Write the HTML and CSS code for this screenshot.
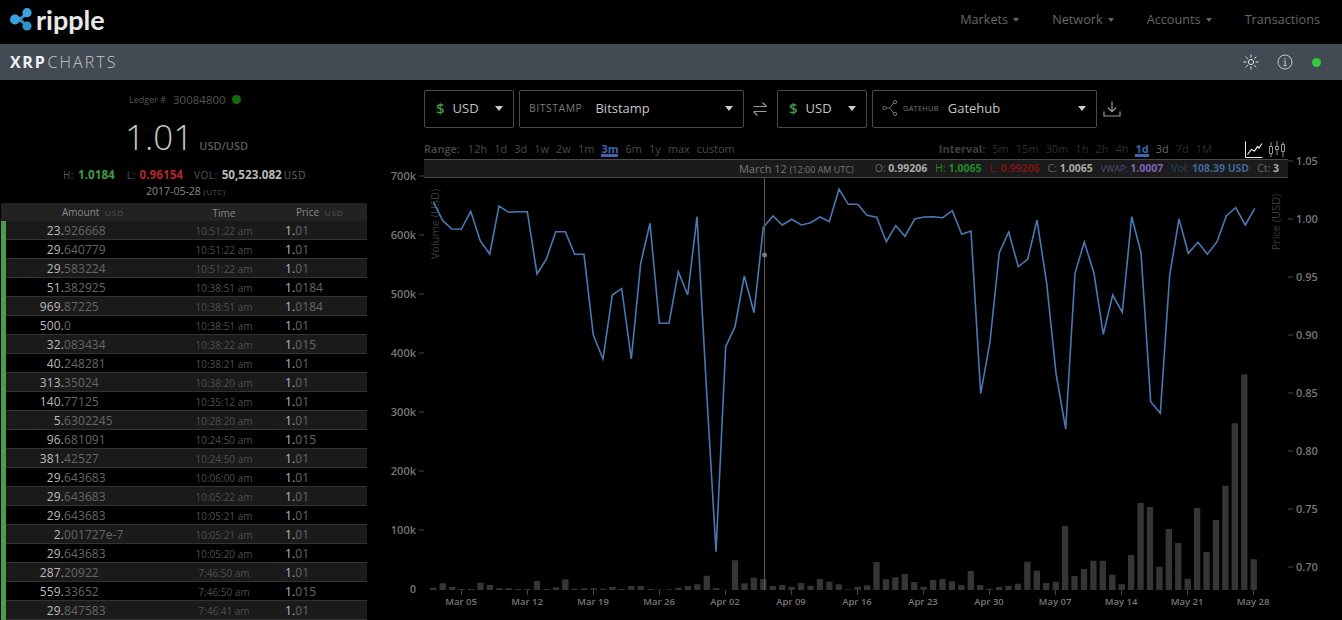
FILE: index.html
```html
<!DOCTYPE html>
<html lang="en">
<head>
<meta charset="utf-8">
<title>XRP Charts</title>
<link rel="stylesheet" href="styles.css">
</head>
<body>
<header class="topbar">
  <a class="logo">
    <svg class="logo-mark" width="26" height="24" viewBox="0 0 26 24"><g stroke="#2f93c9" stroke-width="3" fill="none"><path d="M5 11.5C11 11.5 13 9 17 4.7M5 11.5C11 11.5 13 14 17 18"/></g><circle cx="5" cy="11.5" r="5" fill="#3aa3e0"/><circle cx="17" cy="4.7" r="4.6" fill="#3aa3e0"/><circle cx="17" cy="18" r="4.6" fill="#2f93c9"/></svg>
    <span class="logo-text">ripple</span>
  </a>
  <nav class="nav">
    <span class="nav-item">Markets <i class="caret caret-nav"></i></span>
    <span class="nav-item">Network <i class="caret caret-nav"></i></span>
    <span class="nav-item">Accounts <i class="caret caret-nav"></i></span>
    <span class="nav-item">Transactions</span>
  </nav>
</header>
<div class="subbar">
  <div class="brand"><b>XRP</b><span>CHARTS</span></div>
  <div class="tools">
    <svg width="16" height="16" viewBox="0 0 16 16" fill="none" stroke="#ddd" stroke-width="1"><circle cx="8" cy="8" r="2.6"/><path d="M8 0.5v3M8 12.5v3M0.5 8h3M12.5 8h3M2.7 2.7l2.1 2.1M11.2 11.2l2.1 2.1M2.7 13.3l2.1-2.1M11.2 4.8l2.1-2.1"/></svg>
    <svg width="16" height="16" viewBox="0 0 16 16" fill="none" stroke="#ccc" stroke-width="1"><circle cx="8" cy="8" r="7"/><path d="M6.8 7h1.4v4.5M6.6 11.5h3M8 4v1.4"/></svg>
    <i class="status-dot"></i>
  </div>
</div>
<main class="main">
  <aside class="left">
    <div class="ledger"><span class="ledger-label">Ledger #</span><span class="ledger-num">30084800</span><i class="ledger-dot"></i></div>
    <div class="price-line"><span class="price">1.01</span><span class="pair">USD/USD</span></div>
    <div class="stats">
      <span class="stat-label">H:</span><b class="green">1.0184</b>
      <span class="stat-label l-label">L:</span><b class="red">0.96154</b>
      <span class="stat-label vol-label">VOL:</span><b class="vol">50,523.082</b><span class="vol-cur">USD</span>
    </div>
    <div class="date">2017-05-28 <small>(UTC)</small></div>
    <div class="table">
      <div class="thead"><span class="th-amount">Amount <small>USD</small></span><span class="th-time">Time</span><span class="th-price">Price <small>USD</small></span></div>
      <div class="tr"><i class="bar"></i><span class="int">23.</span><span class="frac">926668</span><span class="time">10:51:22 am</span><span class="px">1.<em>01</em></span></div>
      <div class="tr"><i class="bar"></i><span class="int">29.</span><span class="frac">640779</span><span class="time">10:51:22 am</span><span class="px">1.<em>01</em></span></div>
      <div class="tr"><i class="bar"></i><span class="int">29.</span><span class="frac">583224</span><span class="time">10:51:22 am</span><span class="px">1.<em>01</em></span></div>
      <div class="tr"><i class="bar"></i><span class="int">51.</span><span class="frac">382925</span><span class="time">10:38:51 am</span><span class="px">1.<em>0184</em></span></div>
      <div class="tr"><i class="bar"></i><span class="int">969.</span><span class="frac">87225</span><span class="time">10:38:51 am</span><span class="px">1.<em>0184</em></span></div>
      <div class="tr"><i class="bar"></i><span class="int">500.</span><span class="frac">0</span><span class="time">10:38:51 am</span><span class="px">1.<em>01</em></span></div>
      <div class="tr"><i class="bar"></i><span class="int">32.</span><span class="frac">083434</span><span class="time">10:38:22 am</span><span class="px">1.<em>015</em></span></div>
      <div class="tr"><i class="bar"></i><span class="int">40.</span><span class="frac">248281</span><span class="time">10:38:21 am</span><span class="px">1.<em>01</em></span></div>
      <div class="tr"><i class="bar"></i><span class="int">313.</span><span class="frac">35024</span><span class="time">10:38:20 am</span><span class="px">1.<em>01</em></span></div>
      <div class="tr"><i class="bar"></i><span class="int">140.</span><span class="frac">77125</span><span class="time">10:35:12 am</span><span class="px">1.<em>01</em></span></div>
      <div class="tr"><i class="bar"></i><span class="int">5.</span><span class="frac">6302245</span><span class="time">10:28:20 am</span><span class="px">1.<em>01</em></span></div>
      <div class="tr"><i class="bar"></i><span class="int">96.</span><span class="frac">681091</span><span class="time">10:24:50 am</span><span class="px">1.<em>015</em></span></div>
      <div class="tr"><i class="bar"></i><span class="int">381.</span><span class="frac">42527</span><span class="time">10:24:50 am</span><span class="px">1.<em>01</em></span></div>
      <div class="tr"><i class="bar"></i><span class="int">29.</span><span class="frac">643683</span><span class="time">10:06:00 am</span><span class="px">1.<em>01</em></span></div>
      <div class="tr"><i class="bar"></i><span class="int">29.</span><span class="frac">643683</span><span class="time">10:05:22 am</span><span class="px">1.<em>01</em></span></div>
      <div class="tr"><i class="bar"></i><span class="int">29.</span><span class="frac">643683</span><span class="time">10:05:21 am</span><span class="px">1.<em>01</em></span></div>
      <div class="tr"><i class="bar"></i><span class="int">2.</span><span class="frac">001727e-7</span><span class="time">10:05:21 am</span><span class="px">1.<em>01</em></span></div>
      <div class="tr"><i class="bar"></i><span class="int">29.</span><span class="frac">643683</span><span class="time">10:05:20 am</span><span class="px">1.<em>01</em></span></div>
      <div class="tr"><i class="bar"></i><span class="int">287.</span><span class="frac">20922</span><span class="time">7:46:50 am</span><span class="px">1.<em>01</em></span></div>
      <div class="tr"><i class="bar"></i><span class="int">559.</span><span class="frac">33652</span><span class="time">7:46:50 am</span><span class="px">1.<em>015</em></span></div>
      <div class="tr"><i class="bar"></i><span class="int">29.</span><span class="frac">847583</span><span class="time">7:46:41 am</span><span class="px">1.<em>01</em></span></div>
    </div>
  </aside>
  <section class="right">
    <div class="selectors">
      <div class="select sel-cur"><span class="dollar">$</span><span class="sel-name">USD</span><i class="caret caret-sel"></i></div>
      <div class="select sel-gw"><span class="gw-label">BITSTAMP</span><span class="sel-name">Bitstamp</span><i class="caret caret-sel"></i></div>
      <svg class="swap" width="16" height="16" viewBox="0 0 16 16" fill="none" stroke="#999" stroke-width="1.1"><path d="M1.5 5.5h13M10.5 1.5l4 4M14.5 10.5h-13M5.5 14.5l-4-4"/></svg>
      <div class="select sel-cur"><span class="dollar">$</span><span class="sel-name">USD</span><i class="caret caret-sel"></i></div>
      <div class="select sel-gw sel-gh">
        <svg width="16" height="16" viewBox="0 0 16 16" fill="none" stroke="#888" stroke-width=".8"><circle cx="2.5" cy="8" r="1.7"/><circle cx="13" cy="2" r="1.7"/><circle cx="13" cy="14" r="1.7"/><path d="M4.5 8h3M7.5 8l4-5M7.5 8l4 5"/></svg>
        <span class="gw-label gw-small">GATEHUB</span><span class="sel-name">Gatehub</span><i class="caret caret-sel"></i>
      </div>
      <svg class="download" width="18" height="18" viewBox="0 0 18 18" fill="none" stroke="#999" stroke-width="1.2"><path d="M9 1.5v10M4.8 7.5l4.2 4.2 4.2-4.2M1 11.5v4.5h16v-4.5"/></svg>
    </div>
    <div class="controls">
      <div class="range">
        <span class="label">Range:</span><span>12h</span><span>1d</span><span>3d</span><span>1w</span><span>2w</span><span>1m</span><span class="active">3m</span><span>6m</span><span>1y</span><span>max</span><span>custom</span>
      </div>
      <div class="interval">
        <span class="label">Interval:</span><span>5m</span><span>15m</span><span>30m</span><span>1h</span><span>2h</span><span>4h</span><span class="active">1d</span><span class="on">3d</span><span>7d</span><span>1M</span>
      </div>
      <div class="chart-types">
        <svg width="18" height="17" viewBox="0 0 18 17" fill="none" stroke="#eee" stroke-width="1"><path d="M.5 .5V16.5H17.5"/><path d="M2.5 13.5L6.5 8.5L9.5 10L12.5 5.5L14 7L17 2.5" stroke-width="1.2"/></svg>
        <svg width="18" height="17" viewBox="0 0 18 17" fill="none" stroke="#999" stroke-width="1"><path d="M3 1v15M9 0v14M15 1v15"/><path d="M1.5 5.5h3v7h-3zM7.5 5.5h3v3h-3zM13.5 3.5h3v7h-3z" fill="#000"/></svg>
      </div>
    </div>
    <div class="chart">
      <svg class="plot" width="975" height="461" viewBox="367 159 975 461">
        <path class="bars" d="M433.3 590v-2.3m9.43 2.3v-6.7m9.43 6.7v-3m9.43 3v-1m9.43 1v-1m9.43 1v-7.3m9.43 7.3v-5m9.43 5v-1.7m9.43 1.7v-1.7m9.43 1.7v-1m9.43 1v-1m9.43 1v-9m9.43 9v-1m9.43 1v-2.7m9.43 2.7v-10.7m9.43 10.7v-1.3m9.43 1.3v-1.7m9.43 1.7v-1.7m9.43 1.7v-1.3m9.43 1.3v-3m9.43 3v-1m9.43 1v-4m9.43 4v-4m9.43 4v-1m9.43 1v-.5m9.43 .5v-.7m9.43 .7v-2.3m9.43 2.3v-4m9.43 4v-5.7m9.43 5.7v-14.3m9.43 14.3v-2m9.43 2v-.3m9.43 .3v-29.7m9.43 29.7v-6.7m9.43 6.7v-12.3m9.43 12.3v-11m9.43 11v-4m9.43 4v-5m9.43 5v-3.3m9.43 3.3v-7m9.43 7v-4.3m9.43 4.3v-11m9.43 11v-8.3m9.43 8.3v-5.7m9.43 5.7v-.7m9.43 .7v-3.3m9.43 3.3v-4.7m9.43 4.7v-28m9.43 28v-10.7m9.43 10.7v-12.7m9.43 12.7v-16m9.43 16v-8m9.43 8v-3.3m9.43 3.3v-10m9.43 10v-11m9.43 11v-8.7m9.43 8.7v-5m9.43 5v-19m9.43 19v-5m9.43 5v-1.3m9.43 1.3v-3m9.43 3v-4.3m9.43 4.3v-6.3m9.43 6.3v-28.3m9.43 28.3v-19.3m9.43 19.3v-7m9.43 7v-8.3m9.43 8.3v-64m9.43 64v-14m9.43 14v-21m9.43 21v-29.3m9.43 29.3v-29.3m9.43 29.3v-15.3m9.43 15.3v-6m9.43 6v-35m9.43 35v-87m9.43 87v-83m9.43 83v-23.3m9.43 23.3v-61m9.43 61v-47m9.43 47v-11.3m9.43 11.3v-82m9.43 82v-38m9.43 38v-70m9.43 70v-104.3m9.43 104.3v-166.7m9.43 166.7v-215.7m9.43 215.7v-30.7"/>
        <text class="axis-title" transform="translate(439 224) rotate(-90)" text-anchor="middle">Volume (USD)</text>
        <text class="axis-title" transform="translate(1280 222) rotate(-90)" text-anchor="middle">Price (USD)</text>
        <polyline class="line" points="433.3,201.7 442.7,220.7 452,229 461.3,229.3 470.7,211.3 480.3,241 489.7,254 499,206 508.7,212.3 518,211.7 527.3,211.7 537,274 546.3,259.3 555.7,231.7 565.3,231.7 574.7,254.3 584,254.3 593.3,335 603,359 612.3,295 621.7,288.7 631.3,359 640.7,263.3 650,223.3 659.3,323.3 669,323.3 678.3,271.7 687.7,295 697,216.7 706.3,386 716,551.7 725.7,346.7 735,326.7 744.3,276 754,312.7 763.3,227.3 773,216 782.3,225 791.7,219.3 801.3,225 810.7,222.7 820,217 829.3,221.7 839,189.3 848.3,204.3 857.7,204.3 867,215.3 876.7,217.3 886.3,241.7 895.7,225.7 905,236.3 914.7,219 924,217 933.3,216.7 942.7,217.7 952.3,210.7 961.7,234.3 971,231 980.7,393.7 990,341.7 999.3,252.7 1008.7,232 1018.3,266.7 1027.7,259.3 1037,220 1046.7,283.3 1056,373.3 1065.7,429 1075,273.3 1084.3,242 1094,273.3 1103.3,334.3 1112.7,295 1122.3,312.3 1131.7,216.7 1141,252.7 1150.7,401.7 1160.3,413.3 1169.7,275 1179,219 1188.3,253.3 1198,242.3 1207.3,254.3 1217,241.7 1226.3,216 1235.7,207.7 1245.3,225 1254.7,208.3"/>
        <path class="cross" d="M764.5 160V590"/>
        <circle class="cross-dot" cx="764.5" cy="255" r="2.5"/>
        <path class="ticks" d="M419 176h5M419 235h5M419 294h5M419 353h5M419 412h5M419 471h5M419 530h5M1288 161h5M1288 219h5M1288 277h5M1288 335h5M1288 393h5M1288 451h5M1288 509h5M1288 567h5M461.5 590v5M527.5 590v5M593.5 590v5M659.5 590v5M725.5 590v5M791.5 590v5M857.5 590v5M923.5 590v5M989.5 590v5M1055.5 590v5M1121.5 590v5M1187.5 590v5M1253.5 590v5"/>
        <g class="ylabels" text-anchor="end">
          <text x="416" y="180">700k</text><text x="416" y="239">600k</text><text x="416" y="298">500k</text><text x="416" y="357">400k</text><text x="416" y="416">300k</text><text x="416" y="475">200k</text><text x="416" y="534">100k</text><text x="416" y="593">0</text>
        </g>
        <g class="ylabels">
          <text x="1296" y="165">1.05</text><text x="1296" y="223">1.00</text><text x="1296" y="281">0.95</text><text x="1296" y="339">0.90</text><text x="1296" y="397">0.85</text><text x="1296" y="455">0.80</text><text x="1296" y="513">0.75</text><text x="1296" y="571">0.70</text>
        </g>
        <g class="xlabels" text-anchor="middle">
          <text x="461" y="605">Mar 05</text><text x="527" y="605">Mar 12</text><text x="593" y="605">Mar 19</text><text x="659" y="605">Mar 26</text><text x="725" y="605">Apr 02</text><text x="791" y="605">Apr 09</text><text x="857" y="605">Apr 16</text><text x="923" y="605">Apr 23</text><text x="989" y="605">Apr 30</text><text x="1055" y="605">May 07</text><text x="1121" y="605">May 14</text><text x="1187" y="605">May 21</text><text x="1253" y="605">May 28</text>
        </g>
      </svg>
      <div class="hover-bar">
        <span class="hv-date">March 12 <small>(12:00 AM UTC)</small></span>
        <span class="hv">O: <b>0.99206</b></span>
        <span class="hv hv-h">H: <b>1.0065</b></span>
        <span class="hv hv-l">L: <b>0.99206</b></span>
        <span class="hv">C: <b>1.0065</b></span>
        <span class="hv hv-v">VWAP: <b>1.0007</b></span>
        <span class="hv hv-vol">Vol: <b>108.39 USD</b></span>
        <span class="hv">Ct: <b>3</b></span>
      </div>
    </div>
  </section>
</main>
</body>
</html>
```

FILE: styles.css
```css
* { box-sizing: border-box; }
html, body { margin: 0; height: 620px; overflow: hidden; background: #000; }
body { font-family: "Open Sans", "Liberation Sans", sans-serif; color: #888; }
i, em { font-style: normal; }

.topbar { height: 44px; display: flex; justify-content: space-between; align-items: center; background: #000; }
.logo { display: flex; align-items: center; padding-left: 10px; }
.logo-mark { margin-top: -4px; }
.logo-text { font-family: "Lato", sans-serif; font-weight: 700; font-size: 27px; line-height: 40px; color: #e8e8e8; margin-top: -4px; }
.nav { display: flex; gap: 33px; padding-right: 22px; font-size: 12.7px; margin-top: -6px; }
.nav-item { color: #666; display: flex; align-items: center; gap: 5px; }

.caret { display: inline-block; width: 0; height: 0; border-style: solid; border-color: #999 transparent transparent; }
.caret-nav { border-width: 4px 3.5px 0; border-top-color: #666; margin-top: 2px; }
.caret-sel { border-width: 5px 4.5px 0; border-top-color: #ccc; margin-left: auto; }

.subbar { height: 36px; background: #424a54; display: flex; justify-content: space-between; align-items: center; padding: 0 21px 0 10px; }
.brand { font-size: 16px; line-height: 36px; letter-spacing: 2.1px; color: #c4c8cc; display: flex; gap: 1px; }
.brand b { color: #f0f0f0; font-weight: 700; letter-spacing: 1.7px; }
.brand span { font-weight: 300; }
.tools { display: flex; align-items: center; gap: 18px; }
.status-dot { width: 9px; height: 9px; border-radius: 50%; background: #35c83c; margin-left: 1px; }

.main { display: flex; height: 540px; }
.left { width: 367px; flex: none; padding-top: 11px; }
.ledger { display: flex; justify-content: flex-start; align-items: center; height: 16px; padding-left: 129px; gap: 7px; }
.ledger-label { font-size: 9px; color: #555; }
.ledger-num { font-size: 11.5px; color: #555; }
.ledger-dot { width: 9px; height: 9px; border-radius: 50%; background: #136a13; margin-left: -1px; }
.price-line { display: flex; align-items: baseline; padding-left: 125px; margin-top: 8px; height: 44px; }
.price { font-size: 35px; font-weight: 300; line-height: 44px; color: #c8c8c8; }
.pair { font-size: 11px; font-weight: 600; color: #5c5c5c; margin-left: 6px; }
.stats { display: flex; align-items: baseline; padding-left: 63px; margin-top: 6px; height: 18px; line-height: 18px; font-size: 11.7px; }
.stat-label { font-size: 10px; color: #555; letter-spacing: .5px; }
.stats b { font-weight: 700; }
.green { color: #3f9b46; margin-left: 4px; }
.red { color: #b5262c; margin-left: 4px; }
.vol { color: #bbb; margin-left: 4px; }
.l-label { margin-left: 12px; }
.vol-label { margin-left: 11px; }
.vol-cur { font-size: 10px; color: #666; letter-spacing: .8px; margin-left: 2px; }
.date { padding-left: 146px; font-size: 10.5px; line-height: 15px; color: #888; margin-top: 1px; }
.date small { font-size: 8px; color: #555; letter-spacing: .4px; }

.table { margin: 4px 0 0 1px; width: 366px; }
.thead { height: 18px; background: #222; display: grid; grid-template-columns: 177px 92px 1fr; align-items: center; font-size: 10px; color: #888; line-height: 18px; }
.thead small { font-size: 8px; color: #555; letter-spacing: 1px; margin-left: 3px; }
.th-amount { padding-left: 61px; }
.th-time { text-align: center; }
.th-price { padding-left: 26px; }
.tr { height: 19px; display: grid; grid-template-columns: 5px 58px 114px 92px 1fr; align-items: center; line-height: 18px; border-bottom: 1px solid #333; background: #000; font-size: 12px; letter-spacing: .1px; }
.tr:nth-child(even) { background: #1a1a1a; }
.bar { height: 19px; background: #4a9d4f; }
.int { text-align: right; color: #bbb; }
.frac { color: #666; }
.time { text-align: center; font-size: 10px; color: #4f4f4f; letter-spacing: 0; }
.px { padding-left: 15px; color: #bbb; }
.px em { color: #666; }

.right { flex: 1; padding: 0; min-width: 0; }
.selectors { display: flex; align-items: center; height: 38px; margin: 10px 0 0 57px; gap: 5px; }
.select { height: 38px; border: 1px solid #4a4a4a; border-radius: 2px; display: flex; align-items: center; font-size: 13px; color: #c4c4c4; padding: 0 10px 2px 11px; }
.sel-cur { width: 90px; }
.sel-gw { width: 225px; gap: 13px; padding-left: 9px; }
.sel-gh { gap: 0; }
.sel-name { color: #c4c4c4; }
.dollar { color: #3f9b46; font-size: 15px; font-weight: 600; margin-right: 8px; }
.gw-label { font-size: 10.5px; color: #777; letter-spacing: .5px; }
.gw-small { font-size: 7.5px; margin: 0 9px 0 5px; letter-spacing: .2px; }
.swap { margin: 0 4px 0 3px; }
.download { margin-left: 1px; }

.controls { display: flex; height: 31px; margin-left: 57px; width: 864px; padding-top: 13px; font-size: 11px; line-height: 16px; color: #4a4a4a; position: relative; }
.range { display: flex; gap: 7px; }
.range .label { margin-right: 1px; color: #4a4a4a; font-weight: 600; }
.interval { display: flex; gap: 7px; margin-left: auto; margin-right: 76px; color: #2e2e2e; }
.interval .label { color: #3e3e3e; font-weight: 700; }
.interval .on { color: #666; }
.active { color: #3f66a8; font-weight: 700; border-bottom: 3px solid #3f66a8; height: 16px; line-height: 15px; }
.chart-types { position: absolute; right: 2px; top: 13px; display: flex; gap: 5px; }

.chart { position: relative; height: 461px; }
.plot { display: block; overflow: visible; }
.bars { stroke: #353535; stroke-width: 6.3; fill: none; }
.line { fill: none; stroke: #4a78b4; stroke-width: 1.6; stroke-linejoin: miter; }
.cross { stroke: #5a5a5a; stroke-width: 1; }
.cross-dot { fill: #777; }
.ticks { stroke: #444; stroke-width: 1; fill: none; }
.axis-title { font-size: 11px; fill: #3c3c3c; }
.ylabels text { font-size: 11px; font-weight: 600; fill: #777; }
.xlabels text { font-size: 9.5px; font-weight: 600; fill: #777; }

.hover-bar { position: absolute; left: 57px; top: 0; width: 864px; height: 19px; background: #1b1b1b; border-top: 1px solid #4a4a4a; border-bottom: 1px solid #4a4a4a; display: flex; align-items: center; justify-content: flex-end; gap: 8px; padding-right: 9px; font-size: 10.5px; color: #666; line-height: 17px; }
.hover-bar b { font-size: 10.5px; font-weight: 700; color: #aaa; }
.hv-date { font-size: 11px; color: #777; margin-right: 13px; }
.hv-date small { font-size: 9px; }
.hv-h, .hv-h b { color: #1e8c24; }
.hv-l, .hv-l b { color: #7c1216; }
.hv-v { color: #5b4a78; font-size: 9px; }
.hv-v b { color: #7d63b0; }
.hv-vol { color: #2c4464; }
.hv-vol b { color: #3e6699; }
```
